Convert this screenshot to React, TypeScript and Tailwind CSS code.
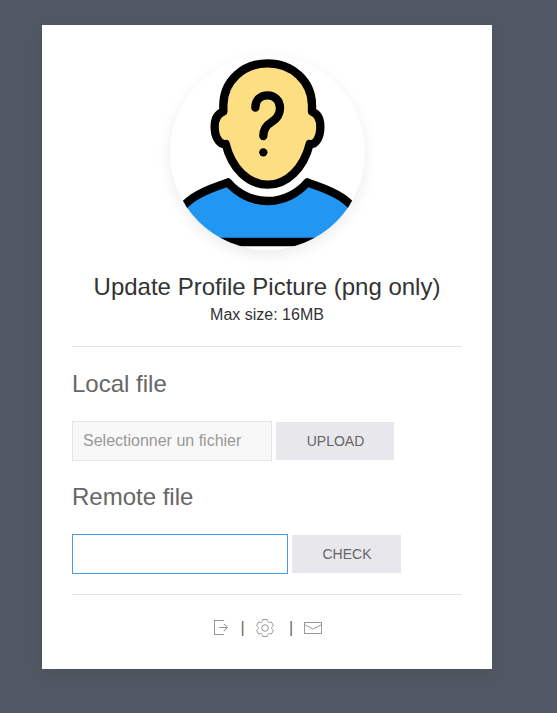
import React from "react";

function Avatar() {
  return (
    <svg
      viewBox="30 30 585 585"
      className="h-[195px] w-[195px] rounded-full bg-white shadow-[0_5px_15px_rgba(0,0,0,0.08)]"
      strokeLinecap="round"
      strokeLinejoin="round"
      strokeWidth="25"
    >
      <path
        d="M190 200 V180 C191 108 250 55 323 55 S455 108 456 180 V200 C472 206 481 222 481 245 C481 275 469 300 449 297 C431 370 381 419 323 419 S215 370 197 297 C177 300 164 275 164 245 C164 222 174 206 190 200 Z"
        fill="#fede82"
        stroke="#000"
      />
      <path
        d="M286 188 C286 165 302 151 323 151 C344 151 360 167 360 189 C360 209 350 222 335 231 C318 241 310 255 310 273"
        fill="none"
        stroke="#000"
      />
      <circle cx="310" cy="322" r="12.5" />
      <path
        d="M0 591 V560 C50 500 75 475 100 458 C135 434 165 427 204 412 C233 446 277 468 323 468 S413 446 442 412 C481 427 511 434 546 458 C571 475 596 500 645 560 V591 Z"
        fill="#2196f3"
        stroke="#000"
      />
    </svg>
  );
}

function SignOutIcon() {
  return (
    <svg width="20" height="20" viewBox="0 0 20 20" fill="currentColor">
      <polygon points="13.1 13.4 12.5 12.8 15.28 10 8 10 8 9 15.28 9 12.5 6.2 13.1 5.62 17 9.5" />
      <polygon points="13 2 3 2 3 17 13 17 13 16 4 16 4 3 13 3" />
    </svg>
  );
}

function CogIcon() {
  return (
    <svg width="20" height="20" viewBox="0 0 20 20" fill="none" stroke="currentColor">
      <circle cx="9.997" cy="10" r="3.31" />
      <path d="M18.488,12.285 L16.205,16.237 C15.322,15.496 14.185,15.281 13.303,15.791 C12.428,16.289 12.047,17.373 12.246,18.5 L7.735,18.5 C7.938,17.374 7.553,16.299 6.684,15.791 C5.801,15.27 4.655,15.492 3.773,16.237 L1.5,12.285 C2.573,11.871 3.317,10.999 3.317,9.991 C3.305,8.98 2.573,8.121 1.5,7.716 L3.765,3.784 C4.645,4.516 5.794,4.738 6.687,4.232 C7.555,3.722 7.939,2.637 7.735,1.5 L12.263,1.5 C12.072,2.637 12.441,3.71 13.314,4.22 C14.206,4.73 15.343,4.516 16.225,3.794 L18.487,7.714 C17.404,8.117 16.661,8.988 16.67,10.009 C16.672,11.018 17.415,11.88 18.488,12.285 Z" />
    </svg>
  );
}

function MailIcon() {
  return (
    <svg width="20" height="20" viewBox="0 0 20 20">
      <polyline points="1.4,6.5 10,11 19.1,6.5" fill="none" stroke="currentColor" />
      <path d="M 1,4 1,16 19,16 19,4 1,4 Z M 18,15 2,15 2,5 18,5 18,15 Z" fill="currentColor" />
    </svg>
  );
}

export default function App() {
  return (
    <div className="h-[713px] w-[557px] overflow-hidden bg-[#525863] pt-[25px] pl-[42px] font-['Liberation_Sans',Arial,sans-serif] text-base text-[#666] antialiased">
      <main className="flex h-[644px] w-[450px] flex-col bg-white px-[30px] pt-[30px] shadow-[0_5px_15px_rgba(0,0,0,0.08)]">
        <div className="flex justify-center">
          <Avatar />
        </div>
        <h1 className="mt-5 text-center text-2xl leading-[34px] text-[#333]">
          Update Profile Picture (png only)
        </h1>
        <p className="text-center leading-[22px] text-[#333]">Max size: 16MB</p>
        <hr className="mt-5 border-[#e5e5e5]" />

        <h2 className="mt-5 text-2xl leading-[34px]">Local file</h2>
        <div className="mt-5 flex items-center gap-1">
          <input
            type="text"
            disabled
            placeholder="Selectionner un fichier"
            className="h-10 w-[200px] border border-[#e5e5e5] bg-[#f8f8f8] px-2.5 placeholder:text-[#999]"
          />
          <button className="h-[38px] w-[118px] bg-[#e8e7ec] pl-px text-sm">UPLOAD</button>
        </div>

        <h2 className="mt-[19px] text-2xl leading-[34px]">Remote file</h2>
        <div className="mt-5 flex items-center gap-1">
          <input
            type="text"
            aria-label="Remote file"
            className="h-10 w-[216px] border border-[#4998e9] px-2.5 outline-none"
          />
          <button className="h-[38px] w-[109px] bg-[#e8e7ec] pl-px text-sm">CHECK</button>
        </div>
        <hr className="mt-5 border-[#e5e5e5]" />

        <nav className="mt-[23px] flex h-5 items-center pl-[139px] leading-5 text-[#999]">
          <SignOutIcon />
          <span className="ml-[9.45px] w-[4.55px] text-[#666]">|</span>
          <span className="ml-[10px]"><CogIcon /></span>
          <span className="ml-[14px] w-[5px] text-[#666]">|</span>
          <span className="ml-[9px]"><MailIcon /></span>
        </nav>
      </main>
    </div>
  );
}
